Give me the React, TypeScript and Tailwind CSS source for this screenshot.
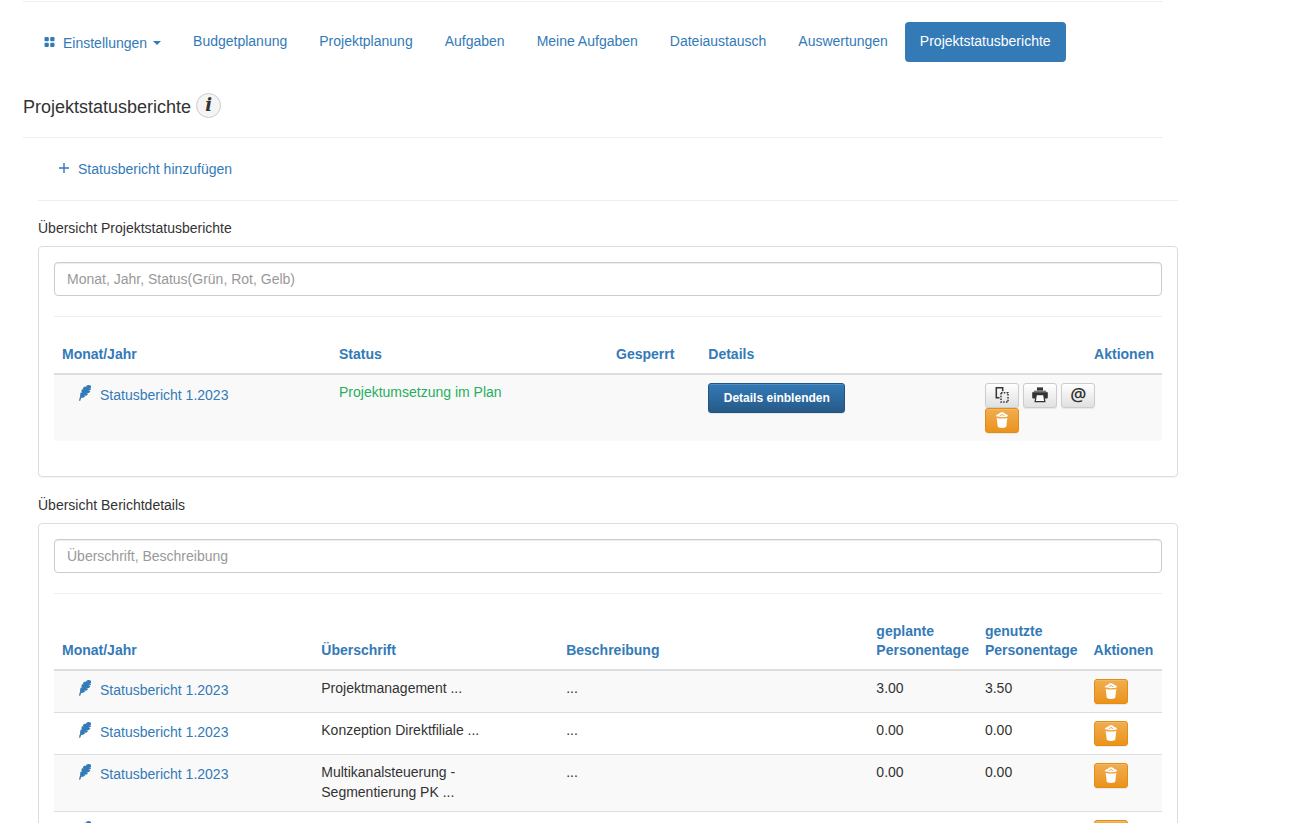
import React from "react";

const navItems = [
  "Budgetplanung",
  "Projektplanung",
  "Aufgaben",
  "Meine Aufgaben",
  "Dateiaustausch",
  "Auswertungen",
];

const details = [
  { title: "Projektmanagement ...", text: "...", planned: "3.00", used: "3.50" },
  { title: "Konzeption Direktfiliale ...", text: "...", planned: "0.00", used: "0.00" },
  { title: "Multikanalsteuerung - Segmentierung PK ...", text: "...", planned: "0.00", used: "0.00" },
  { title: "", text: "", planned: "", used: "" },
];

function GridIcon() {
  return (
    <svg aria-hidden="true" className="size-3.5" viewBox="0 0 14 14" fill="currentColor">
      <rect x="1.5" y="1" width="4.3" height="4.3" rx="1" />
      <rect x="7.2" y="1" width="4.3" height="4.3" rx="1" />
      <rect x="1.5" y="6.7" width="4.3" height="4.3" rx="1" />
      <rect x="7.2" y="6.7" width="4.3" height="4.3" rx="1" />
    </svg>
  );
}

function PlusIcon() {
  return (
    <svg aria-hidden="true" className="size-3" viewBox="0 0 12 12" fill="currentColor">
      <path d="M5.300 0H6.700V4.300H11V5.700H6.700V10H5.300V5.700H1V4.300H5.300z" />
    </svg>
  );
}

function FeatherIcon() {
  return (
    <svg aria-hidden="true" className="h-4 w-3 shrink-0" viewBox="0 0 12 16" fill="currentColor">
      <path d="M11.900.8C10.600-.2 8.300-.1 7.200.9L7.300 2.300 6.200 1.400C5.200 1.700 4.200 2.600 3.900 3.300L4.500 4.800 3.200 4C2.500 4.900 2.400 5.900 2.500 6.800L3.300 8 1.900 7.300C1.200 8.600.9 10 1.200 11.500L.3 13.700.3 16H1.100L2.200 12.900C4.300 12.900 5.300 12.200 6.200 11.300L4.900 10.500l2.300.3C8.100 10.200 8.700 9.500 9.100 8.700L7 8.300l2.900-.4C10.700 7.300 11.200 6.600 11.400 5.900L9.200 5.800 11.600 5C11.900 4.500 12 4.100 12 3.600L10.200 3.700 12 2.700C12.100 2 12.100 1.300 11.900.8z" />
    </svg>
  );
}

function TrashIcon() {
  return (
    <svg aria-hidden="true" className="h-4 w-3.5" viewBox="0 0 14 16" fill="#fff">
      <path d="M1.700 5.900Q7 7 12.300 5.900L11.300 14.600Q11 16 7 16T2.700 14.600z" />
      <path
        fillRule="evenodd"
        d="M.7 4C1.400 2.700 2.700 2.300 3.700 2 4.500.8 5.800.2 7 .2s2.500.6 3.300 1.800c1 .3 2.300.7 3 2-1.300.8-3.500 1.200-6.300 1.200S2 4.800.7 4zM4.500 3.400l2.500-1.400 2.500 1.400L8.800 3.900 7 3.100l-1.800.8z"
      />
    </svg>
  );
}

function CopyIcon() {
  return (
    <svg aria-hidden="true" className="size-4" viewBox="0 0 16 16" fill="none" stroke="#333">
      <path d="M5.500 10.800H2.300V.8H8.700V4.200" strokeWidth="1.500" />
      <rect x="7" y="5.700" width="7" height="9.300" strokeWidth="1.500" strokeDasharray="1.500 1.300" />
    </svg>
  );
}

function PrinterIcon() {
  return (
    <svg aria-hidden="true" className="size-4" viewBox="0 0 16 16">
      <path d="M5 .4h6v3.200H5z" fill="#333" />
      <path d="M2.600 3.400h10.800L15 5.600H1z" fill="#777" />
      <path d="M.2 5.300h15.600v5.200Q15.800 11.500 14.800 11.500H1.200Q.2 11.500 .2 10.500z" fill="#333" />
      <path d="M4.200 7.600h7.600l1 7.100H3.200z" fill="#fff" stroke="#333" strokeWidth="1.300" />
    </svg>
  );
}

function GrayButton({ label, children }: { label: string; children: React.ReactNode }) {
  return (
    <button
      type="button"
      aria-label={label}
      className="flex h-[25px] w-[34px] items-center justify-center rounded-[3px] border border-[#ccc] bg-linear-to-b from-white to-[#e0e0e0] pb-0.5 shadow-[inset_0_1px_0_rgba(255,255,255,0.15),0_1px_1px_rgba(0,0,0,0.075)]"
    >
      {children}
    </button>
  );
}

function DeleteButton() {
  return (
    <button
      type="button"
      aria-label="Löschen"
      className="flex h-[25px] w-[34px] items-center justify-center rounded-[3px] border border-[#e38d13] bg-linear-to-b from-[#f0ad4e] to-[#eb9316] pb-0.5 shadow-[inset_0_1px_0_rgba(255,255,255,0.15),0_1px_1px_rgba(0,0,0,0.075)]"
    >
      <TrashIcon />
    </button>
  );
}

function ReportLink() {
  return (
    <a href="#bericht" className="flex items-start gap-[9px] pt-0.5 pl-[17px] text-[#337ab7]">
      <FeatherIcon />
      <span>Statusbericht 1.2023</span>
    </a>
  );
}

function Panel({ id, label, placeholder, children }: { id: string; label: string; placeholder: string; children: React.ReactNode }) {
  return (
    <section>
      <label htmlFor={id} className="block">{label}</label>
      <div className="mt-2 rounded-[4px] border border-[#ddd] p-[15px] pb-[35px] shadow-[0_1px_1px_rgba(0,0,0,0.05)]">
        <input
          id={id}
          type="text"
          placeholder={placeholder}
          className="block h-[34px] w-full rounded-[4px] border border-[#ccc] px-3 shadow-[inset_0_1px_1px_rgba(0,0,0,0.075)] placeholder:text-[#999]"
        />
        <hr className="my-5 border-[#eee]" />
        {children}
      </div>
    </section>
  );
}

const th = "border-b-2 border-[#ddd] px-2 pt-2 pb-[9px] text-left align-bottom leading-[19px] font-bold text-[#337ab7]";
const textCell = "px-2 pt-[7px] pb-[9px]";
const cell = "px-2 pt-2 pb-2";
const linkCell = "px-2 pt-[7px] pb-2";

export default function App() {
  return (
    <div className="w-full max-w-[1178px] bg-white pl-[23px] font-['Liberation_Sans',Arial,sans-serif] text-[14px] leading-5 text-[#333]">
      <header className="mr-[15px] pt-px">
        <hr className="border-[#eee]" />
        <nav className="mt-5 flex flex-wrap items-start gap-0.5 text-[#337ab7]">
          <a href="#einstellungen" className="flex items-center gap-1.5 pt-[11px] pr-[15px] pb-[9px] pl-5">
            <GridIcon />
            <span>Einstellungen</span>
            <svg aria-hidden="true" className="h-1 w-2" viewBox="0 0 8 4" fill="currentColor">
              <path d="M0 0h8L4 4z" />
            </svg>
          </a>
          {navItems.map((item) => (
            <a key={item} href="#bereich" className="px-[15px] pt-[9px] pb-[11px]">{item}</a>
          ))}
          <a href="#projektstatusberichte" aria-current="page" className="rounded-[4px] bg-[#337ab7] px-[15px] pt-[9px] pb-[11px] text-white">
            Projektstatusberichte
          </a>
        </nav>
        <div className="mt-[31px] flex items-center gap-[5px]">
          <h1 className="pt-0.5 text-[18px] leading-5">Projektstatusberichte</h1>
          <button
            type="button"
            aria-label="Information"
            className="flex size-[25px] items-center justify-center rounded-full border border-[#ccc] bg-[#f4f4f4] pb-0.5"
          >
            <span className="font-['DejaVu_Serif',serif] text-[18px] leading-5 font-bold italic">i</span>
          </button>
        </div>
        <hr className="mt-[19px] border-[#eee]" />
      </header>
      <main className="ml-[15px]">
        <a href="#hinzufuegen" className="ml-5 flex w-fit items-center gap-2 pt-[21px] text-[#337ab7]">
          <PlusIcon />
          Statusbericht hinzufügen
        </a>
        <hr className="mt-[21px] mb-[17px] border-[#eee]" />
        <div className="flex flex-col gap-[18px]">
          <Panel id="suche-berichte" label="Übersicht Projektstatusberichte" placeholder="Monat, Jahr, Status(Grün, Rot, Gelb)">
            <table className="w-full table-fixed border-collapse">
              <thead>
                <tr>
                  <th className={`w-[25%] ${th}`}>Monat/Jahr</th>
                  <th className={`w-[25%] ${th}`}>Status</th>
                  <th className={`w-[8.33%] ${th}`}>Gesperrt</th>
                  <th className={`w-[25%] ${th}`}>Details</th>
                  <th className={th}><span className="block text-right">Aktionen</span></th>
                </tr>
              </thead>
              <tbody>
                <tr className="bg-[#f9f9f9] align-top">
                  <td className={cell}><ReportLink /></td>
                  <td className={`text-[#27ae60] ${textCell}`}>Projektumsetzung im Plan</td>
                  <td className={textCell} />
                  <td className={cell}>
                    <button
                      type="button"
                      className="h-[30px] w-[137px] rounded-[3px] border border-[#245580] bg-linear-to-b from-[#337ab7] to-[#265a88] text-[12px] font-bold text-white shadow-[inset_0_1px_0_rgba(255,255,255,0.15),0_1px_1px_rgba(0,0,0,0.075)]"
                    >
                      Details einblenden
                    </button>
                  </td>
                  <td className={cell}>
                    <div className="grid grid-cols-[34px_34px_34px] gap-x-1">
                      <GrayButton label="Kopieren"><CopyIcon /></GrayButton>
                      <GrayButton label="Drucken"><PrinterIcon /></GrayButton>
                      <GrayButton label="E-Mail">
                        <span className="pb-0.5 font-['Open_Sans',sans-serif] text-[18px] leading-5 font-semibold">@</span>
                      </GrayButton>
                      <DeleteButton />
                    </div>
                  </td>
                </tr>
              </tbody>
            </table>
          </Panel>
          <Panel id="suche-details" label="Übersicht Berichtdetails" placeholder="Überschrift, Beschreibung">
            <table className="w-full table-fixed border-collapse">
              <thead>
                <tr>
                  <th className={`w-[23.4%] ${th}`}>Monat/Jahr</th>
                  <th className={`w-[22.1%] ${th}`}>Überschrift</th>
                  <th className={`w-[28%] ${th}`}>Beschreibung</th>
                  <th className={`w-[9.8%] ${th}`}>geplante Personentage</th>
                  <th className={`w-[9.8%] ${th}`}>genutzte Personentage</th>
                  <th className={th}>Aktionen</th>
                </tr>
              </thead>
              <tbody>
                {details.map((row, i) => (
                  <tr key={i} className="border-b border-[#ddd] align-top odd:bg-[#f9f9f9]">
                    <td className={linkCell}><ReportLink /></td>
                    <td className="pt-[7px] pr-10 pb-[9px] pl-2">{row.title}</td>
                    <td className={textCell}>{row.text}</td>
                    <td className={textCell}>{row.planned}</td>
                    <td className={textCell}>{row.used}</td>
                    <td className={cell}><DeleteButton /></td>
                  </tr>
                ))}
              </tbody>
            </table>
          </Panel>
        </div>
      </main>
    </div>
  );
}
